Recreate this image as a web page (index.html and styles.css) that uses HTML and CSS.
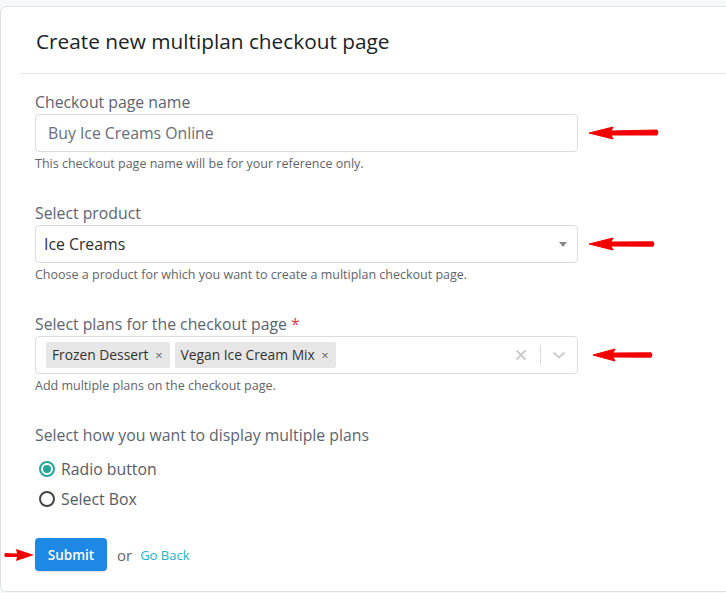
FILE: index.html
```html
<!DOCTYPE html>
<html>
<head>
<meta charset="utf-8">
<link rel="stylesheet" href="styles.css">
</head>
<body>
<div class="card">
  <div class="card-header">
    <h1 class="title">Create new multiplan checkout page</h1>
  </div>
  <div class="card-body">
    <div class="field">
      <label class="label">Checkout page name</label>
      <div class="row">
        <div class="input"><span class="input-text">Buy Ice Creams Online</span></div>
        <svg class="arrow" width="74" height="14" viewBox="0 0 74 14"><path d="M2 7 L26 1 L24 5 L70 4 Q72 6 70 9 L24 9 L26 13 Z" fill="#f20000" stroke="#f20000" stroke-width="1" stroke-linejoin="round"/></svg>
      </div>
      <div class="help">This checkout page name will be for your reference only.</div>
    </div>
    <div class="field">
      <label class="label">Select product</label>
      <div class="row">
        <div class="input select"><span class="select-text">Ice Creams</span><span class="caret"></span></div>
        <svg class="arrow" width="74" height="14" viewBox="0 0 74 14"><path d="M2 7 L26 1 L24 5 L66 4.8 Q68 7 66 9.2 L24 9 L26 13 Z" fill="#f20000" stroke="#f20000" stroke-width="1" stroke-linejoin="round"/></svg>
      </div>
      <div class="help">Choose a product for which you want to create a multiplan checkout page.</div>
    </div>
    <div class="field">
      <label class="label">Select plans for the checkout page <span class="req">*</span></label>
      <div class="row">
        <div class="input multi">
          <div class="tags">
            <span class="tag">Frozen Dessert <span class="tag-x">×</span></span>
            <span class="tag">Vegan Ice Cream Mix <span class="tag-x">×</span></span>
          </div>
          <div class="indicators">
            <svg class="clear" width="12" height="12" viewBox="0 0 12 12"><path d="M1.5 1.5 L10.5 10.5 M10.5 1.5 L1.5 10.5" stroke="#cccccc" stroke-width="2"/></svg>
            <span class="sep"></span>
            <svg class="chev" width="14" height="10" viewBox="0 0 14 10"><path d="M1.5 2.5 L7 7.5 L12.5 2.5" stroke="#cccccc" stroke-width="2" fill="none"/></svg>
          </div>
        </div>
        <svg class="arrow arrow3" width="66" height="14" viewBox="0 0 66 14"><path d="M2 7 L24 1 L22 5 L60 4.8 Q62 7 60 9.2 L22 9 L24 13 Z" fill="#f20000" stroke="#f20000" stroke-width="1" stroke-linejoin="round"/></svg>
      </div>
      <div class="help">Add multiple plans on the checkout page.</div>
    </div>
    <div class="field last">
      <label class="label">Select how you want to display multiple plans</label>
      <div class="radios">
        <div class="radio"><span class="dot checked"></span>Radio button</div>
        <div class="radio"><span class="dot"></span>Select Box</div>
      </div>
    </div>
    <div class="actions">
      <svg class="arrow-left" width="32" height="14" viewBox="0 0 32 14"><path d="M2 5 L14 5.5 L13 1 L31 7 L13 13 L14 9 L2 9 Q0.5 7 2 5 Z" fill="#f20000"/></svg>
      <button class="btn">Submit</button>
      <span class="or">or</span>
      <a class="back">Go Back</a>
    </div>
  </div>
</div>
</body>
</html>
```

FILE: styles.css
```css
* { box-sizing: border-box; }
html, body { margin: 0; padding: 0; }
body {
  background: #f7f8fa;
  font-family: "Open Sans", Lato, sans-serif;
  width: 726px;
  height: 593px;
  overflow: hidden;
  padding-top: 6px;
}
.card {
  background: #fff;
  border: 1px solid #dde1e6;
  border-radius: 6px;
  width: 760px;
  height: 586px;
  padding-left: 19px;
}
.card-header {
  border-bottom: 1px solid #e3e6ea;
  height: 67px;
  padding: 22px 0 0 16px;
}
.title {
  margin: 0;
  font-size: 20.8px;
  font-weight: 400;
  color: #1b1e24;
  line-height: 24px;
}
.card-body {
  padding: 18px 0 0 15px;
}
.field { margin-bottom: 31px; }
.field.last { margin-bottom: 0; }
.label {
  display: block;
  font-size: 15.8px;
  color: #5c6470;
  line-height: 20px;
  margin-bottom: 2px;
}
.req { color: #e0384a; }
.row { display: flex; align-items: center; }
.arrow { margin-left: 9px; }
.arrow3 { margin-left: 13px; }
.input {
  width: 543px;
  height: 38px;
  border: 1px solid #d9dbde;
  border-radius: 4px;
  display: flex;
  align-items: center;
}
.input-text {
  padding-left: 12px;
  font-size: 15.8px;
  color: #676d76;
}
.select { padding: 0 10px 0 8px; justify-content: space-between; }
.select-text { font-size: 15.8px; color: #2b2e33; }
.caret {
  width: 0; height: 0;
  border-left: 4px solid transparent;
  border-right: 4px solid transparent;
  border-top: 5px solid #888;
  margin-right: 0;
}
.multi { padding: 0 10px 0 10px; justify-content: space-between; }
.tags { display: flex; gap: 5px; }
.tag {
  background: #e6e6e6;
  border-radius: 2px;
  font-size: 13.8px;
  color: #333;
  padding: 4px 7px 4px 6px;
  line-height: 18px;
}
.tag-x { color: #666; font-size: 13px; margin-left: 3px; }
.indicators { display: flex; align-items: center; }
.clear { margin-right: 13px; }
.sep { width: 1px; height: 20px; background: #d9d9d9; margin-right: 11px; }
.chev { margin-right: 1px; }
.help {
  font-size: 12.5px;
  color: #5f646b;
  margin-top: 4px;
  line-height: 16px;
}
.radios { margin-top: 9px; }
.radio {
  display: flex;
  align-items: center;
  font-size: 15.8px;
  color: #555b63;
  height: 30px;
  padding-left: 4px;
}
.dot {
  width: 16px; height: 16px;
  border: 2px solid #444;
  border-radius: 50%;
  margin-right: 6px;
  position: relative;
}
.dot.checked { border-color: #26a69a; }
.dot.checked::after {
  content: "";
  position: absolute;
  left: 2px; top: 2px;
  width: 8px; height: 8px;
  border-radius: 50%;
  background: #26a69a;
}
.actions {
  display: flex;
  align-items: center;
  margin-top: 24px;
  margin-left: -35px;
}
.arrow-left { margin-left: 3px; margin-right: 0; }
.btn {
  background: #1e88e5;
  color: #fff;
  border: none;
  border-radius: 4px;
  font-family: "Open Sans", sans-serif;
  font-size: 13.5px;
  font-weight: 600;
  width: 72px;
  height: 33px;
  box-shadow: 0 1px 2px rgba(0,0,0,0.15);
}
.or { font-size: 15px; color: #666; margin-left: 10px; }
.back { font-size: 13px; color: #1ab5c9; margin-left: 8px; }
```
